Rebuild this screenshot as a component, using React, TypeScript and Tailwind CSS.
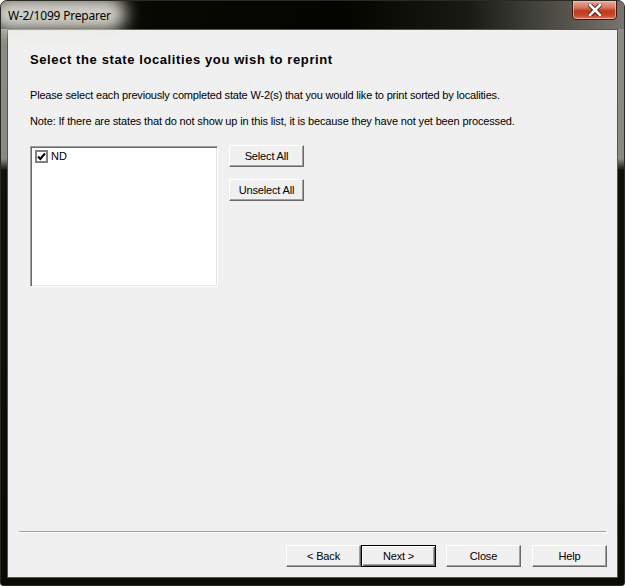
import React from 'react'

const Btn: React.FC<{ label: string; def?: boolean; className?: string }> = ({ label, def, className }) => (
  <button
    className={
      'h-[22px] w-[75px] bg-[#f0f0f0] text-[11px] text-black leading-none tracking-[-0.15px] font-["Liberation_Sans",Arial,sans-serif] ' +
      (def
        ? 'border border-black shadow-[inset_1px_1px_0_#ffffff,inset_-1px_-1px_0_#696969,inset_-2px_-2px_0_#a0a0a0] '
        : 'border-t border-l border-t-white border-l-white border-b border-r border-b-[#696969] border-r-[#696969] shadow-[inset_-1px_-1px_0_#a0a0a0] ') +
      (className || '')
    }
  >
    {label}
  </button>
)

export default function App() {
  return (
    <div className="w-[625px] h-[586px] bg-white">
      <div className="w-[625px] h-[586px] flex flex-col rounded-t-[7px] rounded-b-[3px] border border-[#2a2a24] bg-[linear-gradient(180deg,#8c8c84_0%,#8a8a82_27%,#111109_29%,#0b0b05_100%)] overflow-hidden">
        {/* title bar */}
        <div className="relative h-[28px] shrink-0 bg-[linear-gradient(90deg,#202018_0%,#080802_25%,#050500_55%,#1a1a14_75%,#76766e_100%)]">
          <div className="absolute left-[-10px] top-[-4px] w-[135px] h-[34px] rounded-full bg-[#e6e6de] blur-[8px] opacity-90" />
          <div className="relative pl-[7px] pt-[7px] text-[12px] leading-[16px] tracking-[-0.2px] text-black font-['Noto_Sans','Open_Sans',sans-serif]">
            W-2/1099 Preparer
          </div>
          <div className="absolute right-[7px] top-[-1px] w-[45px] h-[20px] rounded-b-[4px] border border-[#3b1710] bg-[linear-gradient(180deg,#e6a899_0%,#d97a64_35%,#c0391f_55%,#c8472b_80%,#e07a5a_100%)] shadow-[inset_0_0_0_1px_rgba(255,210,200,0.6)] flex items-center justify-center">
            <svg width="14" height="12" viewBox="0 0 14 12">
              <path d="M2 1 L12 11 M12 1 L2 11" stroke="#3a1a14" strokeWidth="4.4" strokeLinecap="square" />
              <path d="M2 1 L12 11 M12 1 L2 11" stroke="#ffffff" strokeWidth="2.6" strokeLinecap="square" />
            </svg>
          </div>
        </div>

        {/* client area */}
        <div className="flex-1 mx-[6px] mb-[7px] bg-[#f0f0f0] border border-[#55554f] flex flex-col font-['Liberation_Sans',Arial,sans-serif] text-black">
          <div className="pl-[22px] pt-[22px]">
            <div className="text-[13px] leading-[16px] font-bold tracking-[0.6px]">
              Select the state localities you wish to reprint
            </div>
            <div className="mt-[21px] text-[11px] leading-[13px] tracking-[-0.18px]">
              Please select each previously completed state W-2(s) that you would like to print sorted by localities.
            </div>
            <div className="mt-[13px] text-[11px] leading-[13px] tracking-[-0.15px]">
              Note: If there are states that do not show up in this list, it is because they have not yet been processed.
            </div>
            <div className="mt-[18px] flex items-start gap-[12px]">
              <div className="w-[188px] h-[141px] bg-white border border-t-[#a0a0a0] border-l-[#a0a0a0] border-b-white border-r-white shadow-[inset_1px_1px_0_#696969,inset_-1px_-1px_0_#e3e3e3] pl-[4px] pt-[2px]">
                <div className="flex items-center gap-[3px] h-[14px]">
                  <div className="w-[13px] h-[13px] border-2 border-[#808080] bg-white flex items-center justify-center">
                    <svg width="9" height="9" viewBox="0 0 9 9">
                      <path d="M1 4.5 L3.3 7 L8 1.5" stroke="#000" strokeWidth="2" fill="none" />
                    </svg>
                  </div>
                  <span className="text-[11px] leading-[13px]">ND</span>
                </div>
              </div>
              <div className="flex flex-col gap-[12px] -mt-[1px] -ml-[1px]">
                <Btn label="Select All" />
                <Btn label="Unselect All" />
              </div>
            </div>
          </div>
          <div className="flex-1" />
          <div className="mx-[11px] h-[2px] border-t border-t-[#a0a0a0] border-b border-b-white" />
          <div className="flex justify-end pr-[10px] pt-[12px] pb-[10px]">
            <Btn label="< Back" />
            <Btn label="Next >" def />
            <Btn label="Close" className="ml-[10px]" />
            <Btn label="Help" className="ml-[11px]" />
          </div>
        </div>
      </div>
    </div>
  )
}
